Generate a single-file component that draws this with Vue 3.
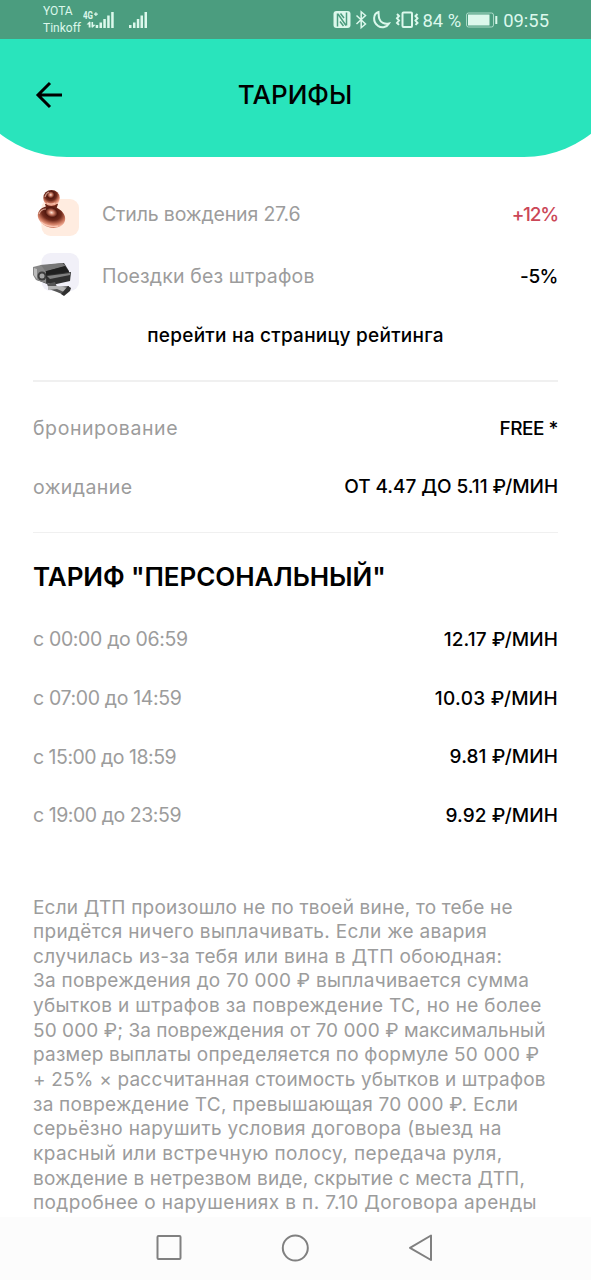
<script setup>
const ratings = [
  {
    id: "style",
    title: "Стиль вождения 27.6",
    value: "+12%",
    raised: true,
    spacing: -0.16,
    valueSpacing: -1.2,
  },
  {
    id: "fines",
    title: "Поездки без штрафов",
    value: "-5%",
    raised: false,
    spacing: 0.15,
    valueSpacing: -0.5,
  },
];

const conditions = [
  { title: "бронирование", value: "FREE *", spacing: 0.57, valueSpacing: -0.5 },
  { title: "ожидание", value: "ОТ 4.47 ДО 5.11 ₽/МИН", spacing: 0.4, valueSpacing: -0.05 },
];

const prices = [
  { title: "с 00:00 до 06:59", value: "12.17 ₽/МИН", spacing: -0.35, valueSpacing: 0.1 },
  { title: "с 07:00 до 14:59", value: "10.03 ₽/МИН", spacing: -0.35, valueSpacing: 0.3 },
  { title: "с 15:00 до 18:59", value: "9.81 ₽/МИН", spacing: -0.5, valueSpacing: 0.1 },
  { title: "с 19:00 до 23:59", value: "9.92 ₽/МИН", spacing: -0.45, valueSpacing: 0.1 },
];

const terms = [
  { text: "Если ДТП произошло не по твоей вине, то тебе не", spacing: 0.2 },
  { text: "придётся ничего выплачивать. Если же авария", spacing: 0.33 },
  { text: "случилась из-за тебя или вина в ДТП обоюдная:", spacing: 0.32 },
  { text: "За повреждения до 70 000 ₽ выплачивается сумма", spacing: 0.24 },
  { text: "убытков и штрафов за повреждение ТС, но не более", spacing: 0.33 },
  { text: "50 000 ₽; За повреждения от 70 000 ₽ максимальный", spacing: 0.08 },
  { text: "размер выплаты определяется по формуле 50 000 ₽", spacing: 0.22 },
  { text: "+ 25% × рассчитанная стоимость убытков и штрафов", spacing: 0.19 },
  { text: "за повреждение ТС, превышающая 70 000 ₽. Если", spacing: 0.24 },
  { text: "серьёзно нарушить условия договора (выезд на", spacing: 0.34 },
  { text: "красный или встречную полосу, передача руля,", spacing: 0.43 },
  { text: "вождение в нетрезвом виде, скрытие с места ДТП,", spacing: 0.16 },
  { text: "подробнее о нарушениях в п. 7.10 Договора аренды", spacing: 0.38 },
];

const tracking = (value) => ({ letterSpacing: value + "px" });
</script>

<template>
  <div class="screen">
    <div class="status">
      <div class="carriers">
        <span>YOTA</span>
        <span>Tinkoff</span>
      </div>
      <svg class="signals" width="66" height="20" viewBox="0 0 66 20">
        <text class="network" x="0" y="9" textLength="10" lengthAdjust="spacingAndGlyphs">4G</text>
        <path class="fill" d="M11 3.500h1.300V2.200h1.200v1.300h1.300v1.200h-1.300V6h-1.200V4.700H11z" />
        <path
          class="fill"
          d="M7.500 12v5.500H5.700v-3H3.500l3-3zM8.500 12h1.600v2.700h2.400l-3 3-1-.500z"
        />
        <path
          class="fill"
          d="M12.700 15h2.500v3h-2.500zM16.500 12.500H19V18h-2.500zM20.300 9h2.500v9h-2.500zM24.200 5.500h2.500V18h-2.500zM28.200 2h2.500v16h-2.500z"
        />
        <path
          class="fill"
          d="M46 15h2.500v3H46zM50 12.500h2.500V18H50zM53.800 9h2.500v9h-2.500zM57.500 5.500H60V18h-2.500zM61.500 2H64v16h-2.500z"
        />
      </svg>
      <div class="indicators">
        <svg width="87" height="20" viewBox="0 0 87 20">
          <rect class="fill" x="0.500" y="1" width="17" height="17" rx="3" />
          <path class="cut" d="M4.500 3.500v13M13.500 2.500v13M5 4l8 11.500M7.500 3.500l3.500 4.500M7 11.500l3.500 4.500" />
          <path class="line" d="M23.500 5.500l9 8.500-4.300 3.700V1.800l4.300 3.700-9 8.500" />
          <path
            class="line thick"
            d="M45.500 2C40 3.500 39.500 12 45 15.800c4 2.600 9 1.300 11-2.300-4.500 1-8.500-1-9.700-4.700-.700-2.300-.700-4.700-.800-6.800z"
          />
          <rect class="line thick" x="69.500" y="2.500" width="9.500" height="14.500" rx="1" />
          <path
            class="line thick"
            d="M64 4l2 2-2 2.300 2 2.300-2 2.300 2 2M84.500 4l-2 2 2 2.300-2 2.300 2 2.300-2 2"
          />
        </svg>
        <span class="percent">84 %</span>
        <svg width="32" height="16" viewBox="0 0 32 16">
          <rect class="frame" x="0.500" y="1" width="27" height="14" rx="2" />
          <rect class="fill" x="2" y="2.500" width="21.500" height="11" />
          <rect class="fill" x="29.300" y="4" width="2" height="8" />
        </svg>
        <span class="time">09:55</span>
      </div>
    </div>

    <header>
      <svg width="30" height="30" viewBox="0 0 30 30">
        <path d="M27 15H3M15 3L3 15l12 12" />
      </svg>
      <h1>ТАРИФЫ</h1>
    </header>

    <main>
      <section class="ratings">
        <div v-for="item in ratings" :key="item.id" class="rating">
          <svg v-if="item.id === 'style'" width="48" height="52" viewBox="0 0 48 52">
            <defs>
              <radialGradient id="copper" cx="0.45" cy="0.3" r="0.72">
                <stop offset="0" stop-color="#ffe5d8" />
                <stop offset="0.14" stop-color="#c87962" />
                <stop offset="0.3" stop-color="#54190f" />
                <stop offset="0.5" stop-color="#6f2a1c" />
                <stop offset="0.72" stop-color="#c9755c" />
                <stop offset="0.9" stop-color="#f5b39c" />
                <stop offset="1" stop-color="#b9624b" />
              </radialGradient>
            </defs>
            <rect x="8.500" y="11" width="37.500" height="37" rx="9" fill="#ffece0" />
            <path d="M12 16h13l-2 6h-9z" fill="#682618" />
            <ellipse cx="18.500" cy="10" rx="8.300" ry="8" fill="url(#copper)" />
            <ellipse
              cx="18.500"
              cy="29"
              rx="14"
              ry="10.500"
              transform="rotate(18 18.500 29)"
              fill="url(#copper)"
            />
            <path class="shine" d="M6 26q2-5 7-5M12 9q1-4 4-5" />
            <path class="shine" d="M8 34q7 6 17 4M14 15q4 2 8 0" />
          </svg>
          <svg v-else width="48" height="52" viewBox="0 0 48 52">
            <rect x="8.500" y="3" width="37.500" height="38" rx="9" fill="#f1f0f8" />
            <path d="M6 16l25-3 5 8v8L14 34 4 30z" fill="#3c3c3c" />
            <path d="M7 15l22-2 4 3-23 6z" fill="#777777" />
            <path d="M10 22l22-6 4 6-20 4-1 4z" fill="#202020" />
            <path d="M0 17l8-2 5 7v11l-10-3-3-5z" fill="#888888" />
            <path d="M1 18l3 1v10l-3-4z" fill="#bcbcbc" />
            <circle cx="9" cy="26" r="4.500" fill="#3d3d3d" />
            <circle cx="9" cy="26" r="2.500" fill="#a5a5a5" />
            <path d="M14 25l24-3-1 9-18 4-5-3z" fill="#303030" />
            <path d="M14 26l23-3v2l-20 4z" fill="#818181" />
            <path d="M14 34l8-2 2 5 12-1v3l-5 6-7-3-8-3z" fill="#555555" />
            <path d="M15 36h9l12 2-5 4-7-3-9 1z" fill="#b5b5b5" />
            <path d="M35 36l3 2-1 3-6 5-3-2z" fill="#303030" />
          </svg>
          <span class="label" :style="tracking(item.spacing)">{{ item.title }}</span>
          <span
            :class="{ value: true, raised: item.raised }"
            :style="tracking(item.valueSpacing)"
          >
            {{ item.value }}
          </span>
        </div>
        <a class="link">перейти на страницу рейтинга</a>
      </section>

      <section class="conditions">
        <div v-for="row in conditions" :key="row.title" class="row">
          <span class="label" :style="tracking(row.spacing)">{{ row.title }}</span>
          <span class="value" :style="tracking(row.valueSpacing)">{{ row.value }}</span>
        </div>
      </section>

      <section class="prices">
        <h2>ТАРИФ "ПЕРСОНАЛЬНЫЙ"</h2>
        <div v-for="row in prices" :key="row.title" class="row">
          <span class="label" :style="tracking(row.spacing)">{{ row.title }}</span>
          <span class="value" :style="tracking(row.valueSpacing)">{{ row.value }}</span>
        </div>
      </section>

      <p class="terms">
        <span v-for="line in terms" :key="line.text" :style="tracking(line.spacing)">
          {{ line.text }}
        </span>
      </p>
    </main>

    <nav>
      <svg width="26" height="30" viewBox="0 0 26 30">
        <rect x="1.500" y="3" width="23" height="23" rx="1" />
      </svg>
      <svg width="30" height="30" viewBox="0 0 30 30">
        <circle cx="15.300" cy="15" r="12.500" />
      </svg>
      <svg width="26" height="30" viewBox="0 0 26 30">
        <path d="M23 2.500v24.500L2 14.800z" />
      </svg>
    </nav>
  </div>
</template>

<style>
body {
  margin: 0;
  background-color: #ffffff;
}
</style>

<style scoped>
.screen {
  display: flex;
  flex-direction: column;
  height: 1280px;
  overflow: hidden;
  background-color: #ffffff;
  color: #000000;
  font-family: Inter, "Noto Sans", sans-serif;
}

.status {
  box-sizing: border-box;
  flex: none;
  display: flex;
  height: 39px;
  padding: 0 42px 0 43px;
  background-color: #4b9d7f;
  color: #dcf8ec;
  font-family: Roboto, sans-serif;
}

.carriers {
  display: flex;
  flex-direction: column;
  width: 40px;
  padding-top: 3px;
  font-size: 12px;
  line-height: 17px;
}

.signals {
  margin-top: 10px;
}

.network {
  fill: #dcf8ec;
  font-size: 10px;
  font-weight: 700;
}

.indicators {
  display: flex;
  align-items: center;
  margin-left: auto;
  padding-top: 1px;
  font-size: 18.4px;
}

.percent {
  margin: 0 5px 0 2px;
}

.time {
  margin-left: 5px;
}

.fill {
  fill: #dcf8ec;
}

.line,
.cut,
.frame {
  fill: none;
  stroke: #dcf8ec;
  stroke-width: 1.5;
}

.cut {
  stroke: #4b9d7f;
}

.thick {
  stroke-width: 2;
}

.frame {
  stroke-width: 1;
  opacity: 0.65;
}

header {
  box-sizing: border-box;
  flex: none;
  display: flex;
  align-items: flex-start;
  height: 118px;
  margin: 0 -41px;
  padding: 41px 76px 0;
  border-radius: 0 0 108px 108px;
  background-color: #29e4bc;
}

header path {
  fill: none;
  stroke: #000000;
  stroke-width: 3;
}

h1 {
  flex: 1;
  margin: -1px 31px 0 0;
  font-size: 26px;
  font-weight: 500;
  line-height: 31px;
  text-align: center;
}

main {
  flex: 1;
  min-height: 0;
  padding: 26px 33px 0;
  overflow: hidden;
}

.ratings {
  display: flex;
  flex-direction: column;
  height: 197px;
  border-bottom: 2px solid #f0f0f0;
}

.rating {
  display: flex;
  align-items: center;
  height: 62px;
}

.rating .label {
  margin-left: 21px;
}

.label {
  color: #9c9c9c;
  font-size: 19.5px;
}

.value {
  margin-left: auto;
  font-size: 19px;
  font-weight: 500;
}

.raised {
  color: #cb4757;
}

.shine {
  fill: none;
  stroke: #ffd0bd;
  stroke-width: 1.2;
  opacity: 0.7;
}

.link {
  padding-top: 17px;
  font-size: 19px;
  font-weight: 500;
  letter-spacing: 0.26px;
  line-height: 24px;
  text-align: center;
}

.row {
  display: flex;
  align-items: center;
  height: 58.6px;
}

.conditions {
  padding: 17px 0 16px;
  border-bottom: 1.5px solid #f0f0f0;
}

h2 {
  margin: 0 0 17px;
  padding-top: 28px;
  font-size: 26px;
  font-weight: 600;
  letter-spacing: -0.08px;
  line-height: 32px;
}

.terms {
  display: flex;
  flex-direction: column;
  margin: 51px 0 0;
  color: #9c9c9c;
  font-size: 19px;
  line-height: 24.64px;
}

.terms span {
  white-space: nowrap;
}

nav {
  box-sizing: border-box;
  flex: none;
  display: flex;
  align-items: center;
  justify-content: space-between;
  height: 63px;
  padding: 0 157px 1px 156px;
  background-color: #fcfcfc;
}

nav svg {
  fill: none;
  stroke: #808080;
  stroke-width: 2;
  stroke-linejoin: round;
}
</style>
